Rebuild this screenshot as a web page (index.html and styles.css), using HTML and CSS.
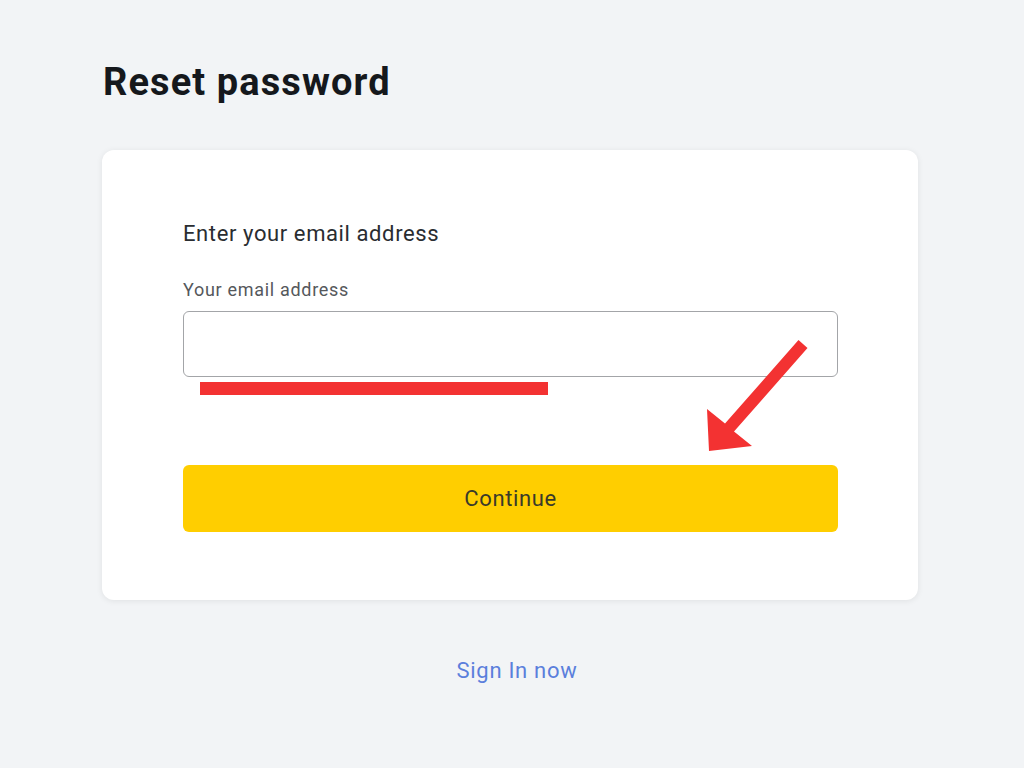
FILE: index.html
```html
<!DOCTYPE html>
<html lang="en">
<head>
  <meta charset="UTF-8">
  <title>Reset password</title>
  <link rel="stylesheet" href="styles.css">
</head>
<body>
  <div class="page">
    <h1 class="title">Reset password</h1>

    <div class="card">
      <form class="form" onsubmit="return false;">
        <p class="intro">Enter your email address</p>
        <label class="label" for="email">Your email address</label>
        <div class="field">
          <input class="input" type="email" id="email" />
          <span class="mark-line"></span>
          <svg class="mark-arrow" width="120" height="130" viewBox="0 0 120 130">
            <polygon points="102.5,11 111.5,19 38,102.5 56,117 13,122 11,80 29,94.5" fill="#f33232" />
          </svg>
        </div>
        <button class="btn" type="submit">Continue</button>
      </form>
    </div>

    <a class="signin" href="#">Sign In now</a>
  </div>
</body>
</html>
```

FILE: styles.css
```css
body { margin: 0; background: #f2f4f6; font-family: Roboto, "Liberation Sans", Arial, sans-serif; }
.page { width: 816px; margin: 0 106px 0 102px; padding-top: 56px; display: flex; flex-direction: column; }
.title { margin: 0 0 42px 1px; font-size: 38px; font-weight: 700; color: #15181c; line-height: 52px; letter-spacing: 1.1px; }
.card { background: #fff; border-radius: 12px; box-shadow: 0 1px 6px rgba(0, 0, 0, 0.08); padding: 69px 80px 68px 81px; }
.form { display: flex; flex-direction: column; }
.intro { margin: 0 0 29px; font-size: 22px; color: #2a2d31; line-height: 30px; letter-spacing: 0.6px; }
.label { font-size: 18px; color: #55585c; line-height: 24px; margin-bottom: 9px; letter-spacing: 0.7px; }
.field { position: relative; margin-bottom: 88px; }
.input { display: block; width: 100%; box-sizing: border-box; height: 66px; border: 1.5px solid #a3a5a8; border-radius: 6px; background: #fff; font-size: 18px; padding: 0 16px; font-family: inherit; }
.mark-line { position: absolute; left: 17px; top: 71px; width: 348px; height: 13px; background: #f33232; }
.mark-arrow { position: absolute; left: 513px; top: 18px; }
.btn { height: 67px; border: 0; border-radius: 6px; background: #ffce00; color: #3a3a2a; font-size: 22px; font-family: inherit; letter-spacing: 0.6px; cursor: pointer; }
.signin { align-self: center; margin-top: 58px; font-size: 22px; color: #5b7fdc; text-decoration: none; padding-left: 14px; letter-spacing: 0.7px; }
```
